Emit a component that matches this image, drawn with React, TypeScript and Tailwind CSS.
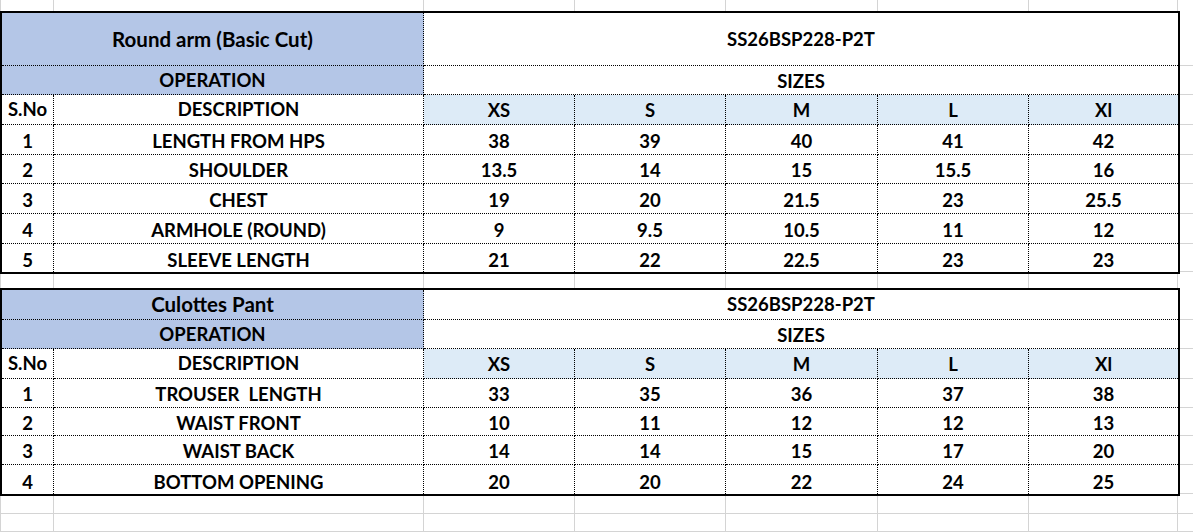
const sizes = ['XS', 'S', 'M', 'L', 'Xl'];

type Row = { no: string; desc: string; values: string[] };

const topRows: Row[] = [
  { no: '1', desc: 'LENGTH FROM HPS', values: ['38', '39', '40', '41', '42'] },
  { no: '2', desc: 'SHOULDER', values: ['13.5', '14', '15', '15.5', '16'] },
  { no: '3', desc: 'CHEST', values: ['19', '20', '21.5', '23', '25.5'] },
  { no: '4', desc: 'ARMHOLE (ROUND)', values: ['9', '9.5', '10.5', '11', '12'] },
  { no: '5', desc: 'SLEEVE LENGTH', values: ['21', '22', '22.5', '23', '23'] },
];

const bottomRows: Row[] = [
  { no: '1', desc: 'TROUSER  LENGTH', values: ['33', '35', '36', '37', '38'] },
  { no: '2', desc: 'WAIST FRONT', values: ['10', '11', '12', '12', '13'] },
  { no: '3', desc: 'WAIST BACK', values: ['14', '14', '15', '17', '20'] },
  { no: '4', desc: 'BOTTOM OPENING', values: ['20', '20', '22', '24', '25'] },
];

const gridCols = 'grid grid-cols-[52px_370px_151px_151px_152px_151px_149px]';
const sheetCols = 'grid grid-cols-[54px_370px_151px_151px_152px_151px_149px_15px]';

// light grey excel grid, used where there is no table
function EmptyRow({ h, line = false }: { h: string; line?: boolean }) {
  return (
    <div className={`${sheetCols} ${h}`}>
      {Array.from({ length: 8 }).map((_, i) => (
        <div
          key={i}
          className={`border-[#d4d4d4] ${i < 7 ? 'border-r' : ''} ${i === 0 ? 'border-l' : ''} ${line ? 'border-b' : ''}`}
        />
      ))}
    </div>
  );
}

function Cell({ children, className = '' }: { children?: React.ReactNode; className?: string }) {
  return (
    <div className={`flex items-center justify-center whitespace-pre border-black border-dotted ${className}`}>
      {children}
    </div>
  );
}

interface SheetTableProps {
  title: string;
  code: string;
  rows: Row[];
  heights: string[]; // title, operation, header, ...data rows
}

function SheetTable({ title, code, rows, heights }: SheetTableProps) {
  return (
    <div className="w-[1180px] border-2 border-black">
      <div className={`${gridCols} ${heights[0]}`}>
        <Cell className="col-span-2 bg-[#b4c6e7] border-r border-b text-[20.5px]">{title}</Cell>
        <Cell className="col-span-5 border-b">{code}</Cell>
      </div>
      <div className={`${gridCols} ${heights[1]}`}>
        <Cell className="col-span-2 bg-[#b4c6e7] border-r border-b">OPERATION</Cell>
        <Cell className="col-span-5 border-b pt-[3px]">SIZES</Cell>
      </div>
      <div className={`${gridCols} ${heights[2]}`}>
        <Cell className="border-r border-b">S.No</Cell>
        <Cell className="border-r border-b">DESCRIPTION</Cell>
        {sizes.map((s, i) => (
          <Cell key={s} className={`bg-[#ddebf7] border-b pt-[2px] ${i < 4 ? 'border-r' : ''}`}>
            {s}
          </Cell>
        ))}
      </div>
      {rows.map((r, ri) => {
        const last = ri === rows.length - 1;
        const b = last ? 'pt-[5px]' : 'border-b pt-[3px]';
        return (
          <div key={r.no} className={`${gridCols} ${heights[ri + 3]}`}>
            <Cell className={`border-r ${b}`}>{r.no}</Cell>
            <Cell className={`border-r ${b}`}>{r.desc}</Cell>
            {r.values.map((v, i) => (
              <Cell key={i} className={`${b} ${i < 4 ? 'border-r' : ''}`}>
                {v}
              </Cell>
            ))}
          </div>
        );
      })}
    </div>
  );
}

// grey gridline stubs to the right of a table
function Filler({ heights }: { heights: string[] }) {
  return (
    <div className="flex-1 flex flex-col">
      <div className="h-[2px]" />
      {heights.map((h, i) => (
        <div key={i} className={`${h} border-b border-[#d4d4d4]`} />
      ))}
    </div>
  );
}

export default function App() {
  const topHeights = ['h-[53px]', 'h-[29px]', 'h-[30px]', 'h-[30px]', 'h-[29px]', 'h-[30px]', 'h-[30px]', 'h-[28px]'];
  const bottomHeights = ['h-[30px]', 'h-[29px]', 'h-[30px]', 'h-[29px]', 'h-[28px]', 'h-[29px]', 'h-[29px]', 'h-[26px]'];

  return (
    <div className="w-[1193px] h-[532px] overflow-hidden bg-white text-black font-['Lato','Liberation_Sans',sans-serif] font-bold text-[18.5px] leading-none">
      <EmptyRow h="h-[11px]" />
      <div className="flex">
        <SheetTable title="Round arm (Basic Cut)" code="SS26BSP228-P2T" rows={topRows} heights={topHeights} />
        <Filler heights={topHeights} />
      </div>
      <EmptyRow h="h-[14px]" />
      <div className="flex">
        <SheetTable title="Culottes Pant" code="SS26BSP228-P2T" rows={bottomRows} heights={bottomHeights.slice(0, 7)} />
        <Filler heights={bottomHeights.slice(0, 7)} />
      </div>
      <EmptyRow h="h-[18px]" line />
      <EmptyRow h="h-[18px]" line />
      <EmptyRow h="h-[3px]" />
    </div>
  );
}
